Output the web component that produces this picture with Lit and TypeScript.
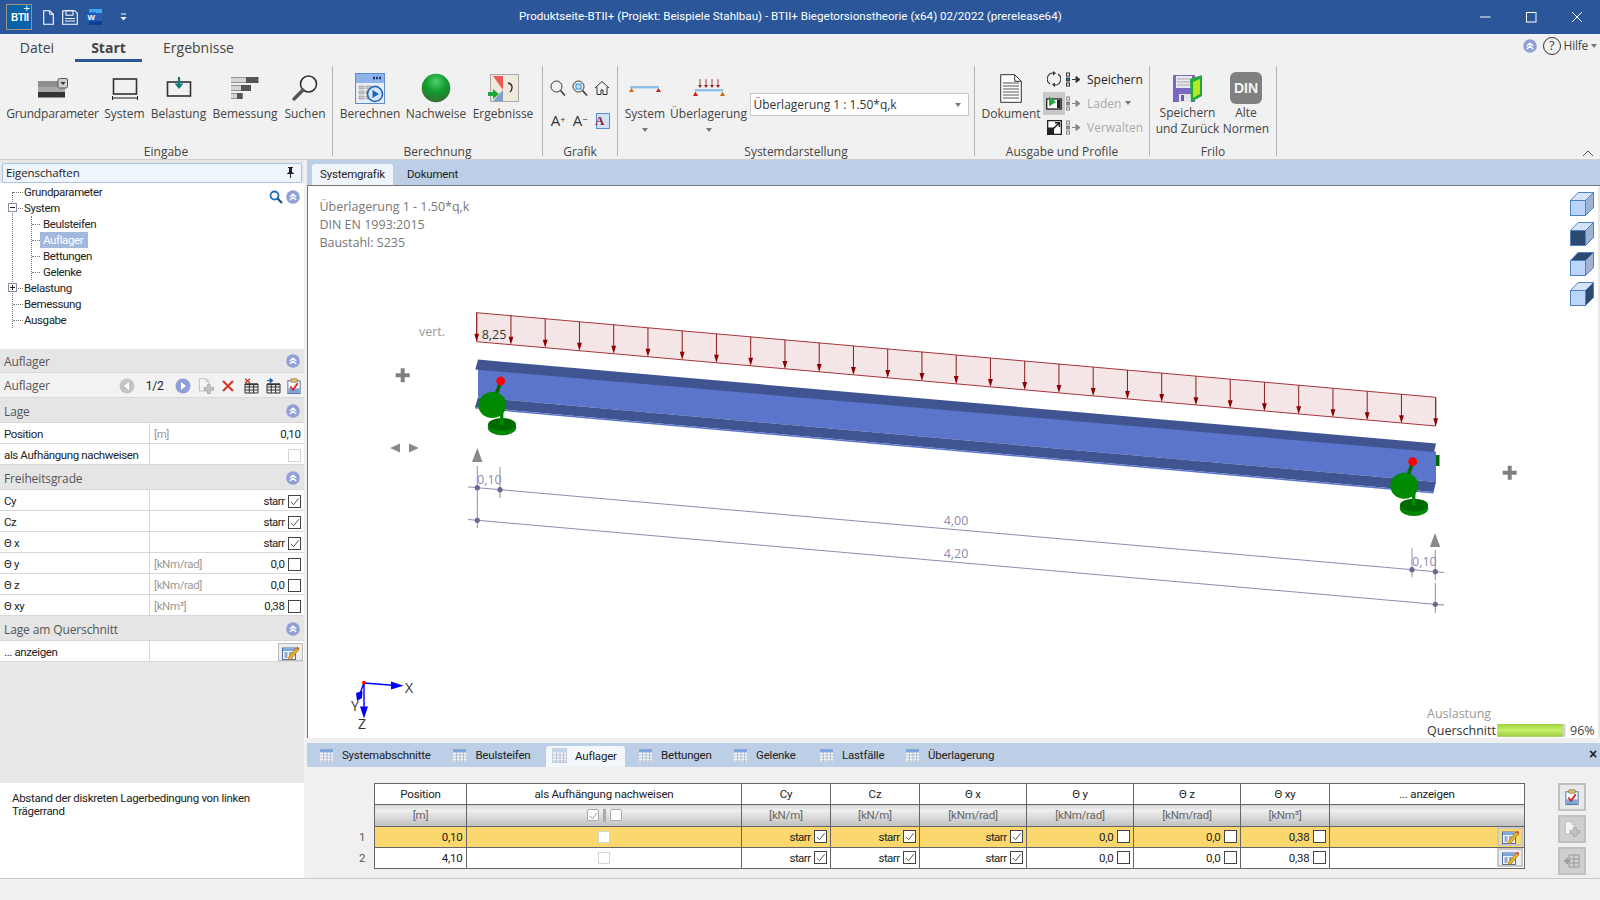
import { LitElement, html, css, svg } from "lit";
import { customElement } from "lit/decorators.js";

const chev = () => html`<svg class="chev" viewBox="0 0 14 14"><circle cx="7" cy="7" r="6.8" fill="#8f9fd8"/><path d="M3.8 7 7 4.2 10.2 7M3.8 10 7 7.2 10.2 10" fill="none" stroke="#fff" stroke-width="1.4"/></svg>`;
const gridIcon = (on = false) => html`<svg class="tabic" viewBox="0 0 15 15"><rect x=".5" y=".5" width="14" height="14" fill="#f6f8fc" stroke="#c4cedd"/><rect x="1" y="1" width="13" height="3.5" fill="${on ? "#c4d4ec" : "#7ea6de"}"/><path d="M1 7h13M1 10h13M1 13h13M4.5 4.5v10M8 4.5v10M11.500 4.5v10" stroke="${on ? "#aab6cc" : "#a8b4c6"}" stroke-width=".8"/></svg>`;
const check = (on: boolean, dis = false) => html`<span class="cb ${dis ? "dis" : ""}">${on ? html`<svg viewBox="0 0 12 12"><path d="M2 6.5 5 9.5 10.5 2.5" fill="none" stroke="#444" stroke-width="1"/></svg>` : ""}</span>`;
const editIcon = () => html`<svg class="ed" viewBox="0 0 17 15"><rect x=".5" y="3" width="13" height="11.500" fill="#f4f7fc" stroke="#4a6fa8"/><rect x="1" y="3.500" width="12" height="2.500" fill="#7ea6de"/><path d="M2.500 8h3M2.500 10h3M2.500 12h3M7 8h4M7 10h2M7 12h1" stroke="#3a5f98"/><path d="M6.500 12.500 14 3l2.500 2-7.500 9.200-3 .8z" fill="#f0b020" stroke="#7a5a10" stroke-width=".5"/><path d="M14 3l1.200-1.500 2.300 1.800L16.500 5z" fill="#d84a3a"/></svg>`;
const clip = () => html`<svg class="tool" viewBox="0 0 16 17"><rect x="1.500" y="3" width="13" height="13.500" fill="#fff" stroke="#4a6f9f"/><rect x="2" y="11" width="12" height="5" fill="#7fa4d8"/><rect x="4.500" y=".8" width="7" height="3.700" rx="1" fill="#e0c07a" stroke="#8a6a30" stroke-width=".7"/><path d="M4 9 7 12.500l5-7" fill="none" stroke="#d8222a" stroke-width="1.900"/></svg>`;
const tblIcon = (mark: string) => html`<svg class="tool" viewBox="0 0 16 16"><path d="M2 6h13v9H2zM2 9h13M2 12h13M6.300 6v9M10.600 6v9" fill="none" stroke="#333" stroke-width="1"/><rect x="2" y="5.500" width="13" height="1.600" fill="#333"/>${mark === "x"
  ? svg`<path d="M2 .8 7 5M7 .8 2 5" stroke="#c8322a" stroke-width="1.400"/>`
  : svg`<path d="M2 2.600h4M5 .4l3 2.200-3 2.200z" fill="#1d5fa8" stroke="#1d5fa8"/>`}</svg>`;
const pagePlus = () => html`<svg class="tool" viewBox="0 0 17 17"><path d="M1.500 .8h7l3 3v10h-10z" fill="#f4f4f4" stroke="#bdbdbd"/><path d="M8.500 .8v3h3" fill="none" stroke="#bdbdbd"/><path d="M10 7h3v3h3.500v3H13v3.500h-3V13H6.500v-3H10z" fill="#c4c4c4" stroke="#999" stroke-width=".7"/></svg>`;
const treeRows = [
  { t: "Grundparameter", l: 0 }, { t: "System", l: 0, box: "-" }, { t: "Beulsteifen", l: 1 },
  { t: "Auflager", l: 1, sel: true }, { t: "Bettungen", l: 1 }, { t: "Gelenke", l: 1 },
  { t: "Belastung", l: 0, box: "+" }, { t: "Bemessung", l: 0 }, { t: "Ausgabe", l: 0 },
];
const dof = [
  { n: "Cy", u: "", v: "starr", c: true }, { n: "Cz", u: "", v: "starr", c: true }, { n: "Θ x", u: "", v: "starr", c: true },
  { n: "Θ y", u: "[kNm/rad]", v: "0,0", c: false }, { n: "Θ z", u: "[kNm/rad]", v: "0,0", c: false }, { n: "Θ xy", u: "[kNm³]", v: "0,38", c: false },
];
const bottomTabs = ["Systemabschnitte", "Beulsteifen", "Auflager", "Bettungen", "Gelenke", "Lastfälle", "Überlagerung"];
const heads = ["Position", "als Aufhängung nachweisen", "Cy", "Cz", "Θ x", "Θ y", "Θ z", "Θ xy", "... anzeigen"];
const units = ["[m]", "", "[kN/m]", "[kN/m]", "[kNm/rad]", "[kNm/rad]", "[kNm/rad]", "[kNm³]", ""];

const X0 = 476.7;
const loadTop = (x: number) => 312.7 + 0.0882 * (x - X0);
const dim1 = (x: number) => 487.7 + 0.0877 * (x - 477.3);
const dim2 = (x: number) => 520.3 + 0.0877 * (x - 477.3);

const support = (dx: number, dy: number) => svg`<g transform="translate(${dx} ${dy})">
  <ellipse cx="502" cy="427.5" rx="14" ry="7.5" fill="#008a00" stroke="#006a00" stroke-width=".6"/>
  <ellipse cx="502" cy="424.5" rx="14" ry="6.5" fill="#006a00"/>
  <rect x="500" y="412" width="3.4" height="13" fill="#008a00"/>
  <path d="M500 384 495.5 396" stroke="#006a00" stroke-width="3.6"/>
  <circle cx="500.7" cy="381" r="4.4" fill="#f00"/>
  <ellipse cx="492.3" cy="405" rx="14" ry="13" fill="#008a00"/>
</g>`;
const plus = (x: number, y: number) => svg`<path transform="translate(${x} ${y})" d="M-2 -7h4v5h5v4h-5v5h-4v-5h-5v-4h5z" fill="#808080"/>`;
const cube = (y: number, v: number) => {
  const dark = "#2c4a70";
  return svg`<g transform="translate(1570 ${y})" stroke="#4f82c4" stroke-width="1">
    <path d="M.5 8.5 8 .5h15.500L15.500 8.500z" fill="${v === 2 ? dark : "#d5e4fa"}"/>
    <path d="M15.500 8.500 23.500 .5v15l-8 8z" fill="${v === 3 ? dark : "#9fb2d2"}"/>
    <rect x=".5" y="8.5" width="15" height="15" fill="${v === 1 ? dark : "#bcd6fb"}"/>
  </g>`;
};

@customElement("app-root")
export class AppRoot extends LitElement {
  static styles = css`
    :host { display: block; width: 1600px; height: 900px; overflow: hidden; background: #f1f1f1; color: #222;
      font-family: "Open Sans", "Noto Sans", sans-serif; font-size: 12px; }
    * { box-sizing: border-box; }
    svg { display: block; }
    .root { display: flex; flex-direction: column; width: 1600px; height: 900px; }

    .title { height: 34px; background: #2b579a; color: #fff; display: flex; align-items: center; position: relative; flex: none; }
    .logo { width: 26px; height: 26px; margin-left: 6px; background: #0a62a8; border: 1px solid #a09080; color: #fff; position: relative; padding: 8px 0 0 4px;
      font: bold 10px/10px "Liberation Sans Narrow", "Liberation Sans", sans-serif; letter-spacing: -.3px; }
    .logo b { position: absolute; right: 1px; top: -1px; font: normal 11px/8px "Liberation Sans", sans-serif; letter-spacing: 0; }
    .qa { display: flex; align-items: center; margin-left: 11px; gap: 8px; }
    .qa svg { flex: none; }
    .qa .more { margin-left: 10px; }
    .titletext { position: absolute; left: 519px; top: 0; width: 560px; white-space: nowrap; font: 11.6px/32px Roboto, sans-serif; }
    .win { position: absolute; right: 0; top: 0; }

    .tabs { height: 30px; flex: none; display: flex; position: relative; font-size: 14px; color: #444; }
    .tabs .t { text-align: center; line-height: 28px; height: 28px; }
    .t.datei { width: 74px; margin-right: 1px; }
    .t.start { width: 67px; font-weight: 700; border-bottom: 3px solid #2b579a; color: #444; }
    .t.erg { width: 113px; }
    .help { margin-left: auto; display: flex; align-items: center; height: 23px; gap: 3px; padding-right: 3px; font-size: 12px; letter-spacing: -.25px; }
    .q { width: 18px; height: 18px; border: 1.3px solid #333; border-radius: 50%; text-align: center; line-height: 15px; font-size: 13px; margin-left: 3px; }
    .caret { width: 0; height: 0; border: 3px solid transparent; border-top: 4px solid #777; border-bottom: 0; }

    .ribbon { height: 96px; flex: none; display: flex; position: relative; box-shadow: inset 0 -1px 0 #d0d0d0; }
    .sep { width: 1px; margin: 2px 0 4px; background: #b4b4b4; flex: none; }
    .grp { display: flex; flex-direction: column; flex: none; padding-top: 4px; }
    .grp .c { flex: 1; min-height: 0; }
    .grp .gl { height: 16px; line-height: 16px; text-align: center; color: #444; font-size: 12px; }
    .g1 { width: 332px; } .g2 { width: 209px; } .g3 { width: 74px; } .g4 { width: 356px; } .g5 { width: 174px; } .g6 { width: 126px; }
    .c.g1c { display: grid; grid-template-columns: 91px 40px 55px 65px 42px; column-gap: 6.5px; padding-left: 7px; }
    .c.g2c { display: grid; grid-template-columns: 60px 60px 62px; column-gap: 6px; padding-left: 7px; }
    .it { display: flex; flex-direction: column; align-items: center; white-space: nowrap; color: #444; }
    .ic { height: 38px; padding-top: 2px; display: flex; align-items: center; justify-content: center; flex: none; }
    .lb { line-height: 16px; text-align: center; }
    .lb.tight { letter-spacing: -.18px; }
    .lb.two { line-height: 15.5px; margin-top: -1px; }
    .c.g3c { display: grid; grid-template-columns: repeat(3, 22px); grid-template-rows: 32px 32px; padding: 4px 0 0 4px; }
    .c.g3c > * { display: flex; align-items: center; justify-content: center; }
    .c.g3c .aa { font-size: 15px; color: #333; }
    .aa sup { font-size: 9px; line-height: 0; }
    .c.g4c { display: flex; padding-left: 7px; }
    .sysit { width: 40px; }
    .ubit { width: 75px; margin-left: 6px; margin-right: 4.4px; }
    .sysit .ic, .ubit .ic { height: 38px; padding-top: 4px; }
    .sysit .caret, .ubit .caret { margin-top: 6px; }
    .combo { width: 218.5px; height: 22.5px; margin-top: 25px; background: #fff; border: 1px solid #c8c8c8; display: flex; align-items: center; padding: 1px 7px 0 2px; justify-content: space-between; color: #333; }
    .c.g5c { display: flex; padding-left: 6px; }
    .dok { width: 60px; }
    .mini { display: grid; grid-template-columns: 22px 22px auto; grid-auto-rows: 24px; margin: -1px 0 0 2px; align-items: center; justify-items: start; }
    .mini .g { background: #c8c8c8; height: 23px; width: 22px; display: flex; align-items: center; justify-content: center; }
    .mini .n { width: 22px; display: flex; justify-content: center; }
    .mini .m { display: flex; justify-content: center; width: 20px; margin-left: -2px; }
    .mini .off { color: #aaa; display: flex; align-items: center; gap: 4px; }
    .mini span { white-space: nowrap; }
    .c.g6c { display: grid; grid-template-columns: 61px 44px; column-gap: 6px; padding-left: 7px; }
    .din { width: 32px; height: 32px; background: #808080; border-radius: 6px; color: #f4f4f4; font: bold 14px/32px "Liberation Sans", sans-serif; text-align: center; }
    .rcaret { margin-left: auto; align-self: flex-end; padding: 0 6px 3px 0; }

    .main { flex: 1; min-height: 0; display: flex; }
    .left { width: 304px; flex: none; display: flex; flex-direction: column; background: #e8e8e8; font-family: Roboto, sans-serif; font-size: 11.5px; letter-spacing: -.38px; }
    .caption { margin: 3px 2px 0; height: 20px; background: #eef5fd; border: 1px solid #a9c2e2; border-radius: 2px; display: flex; align-items: center; justify-content: space-between; padding: 0 6px 1px 3px; color: #222; font-family: "Open Sans", sans-serif; font-size: 11.5px; letter-spacing: -.1px; flex: none; }
    .tree { height: 166px; background: #fff; position: relative; padding-top: 1px; flex: none; }
    .row { height: 16px; line-height: 16px; position: relative; padding-left: 24px; white-space: nowrap; }
    .row.l1 { padding-left: 43px; }
    .row::before { content: ""; position: absolute; left: 13px; width: 10px; top: 8px; border-top: 1px dotted #777; }
    .row.l1::before { left: 32px; width: 8px; }
    .row.sel span { background: #a3b8dd; color: #fff; padding-left: 3px; width: 48px; margin-left: -3px; display: inline-block; }
    .guide { position: absolute; border-left: 1px dotted #777; }
    .g-a { left: 12px; top: 9px; height: 136px; }
    .g-b { left: 31px; top: 33px; height: 64px; }
    .box { position: absolute; left: 8px; top: 3px; width: 9px; height: 9px; background: #fff; border: 1px solid #8a8aa8; z-index: 1; }
    .box::before { content: ""; position: absolute; left: 1px; right: 1px; top: 3px; border-top: 1px solid #222; }
    .box.p::after { content: ""; position: absolute; top: 1px; bottom: 1px; left: 3px; border-left: 1px solid #222; }
    .treetools { position: absolute; right: 4px; top: 7px; display: flex; align-items: center; gap: 3px; }
    .chev { width: 14px; height: 14px; flex: none; }
    .sec { height: 25px; background: #e5e5e5; border-bottom: 1px solid #d8d8d8; display: flex; align-items: center; justify-content: space-between; padding: 2px 4px 0; color: #555; flex: none; font-family: "Open Sans", sans-serif; font-size: 12px; letter-spacing: -.12px; }
    .sec.s0 { height: 24px; padding-top: 1px; }
    .tb { height: 25px; padding-top: 1px; background: #f2f2f2; border-bottom: 1px solid #d8d8d8; display: grid; grid-template-columns: 116px 22.6px 32.2px 25px 20.4px 23.6px 21.8px 22.2px 20.6px; align-items: center; justify-items: center; flex: none; }
    .tb .a { justify-self: start; padding-left: 4px; color: #555; font-family: "Open Sans", sans-serif; font-size: 12px; letter-spacing: -.12px; }
    .tb .num { font-size: 12px; letter-spacing: -.2px; }
    .tool { width: 16px; height: 16px; }
    .pr { height: 21px; background: #fff; border-bottom: 1px solid #d8d8d8; display: grid; grid-template-columns: 150px 1fr; flex: none; line-height: 22px; }
    .pr > div:first-child { padding-left: 4px; border-right: 1px solid #d8d8d8; white-space: nowrap; }
    .pv { display: flex; align-items: center; justify-content: space-between; padding: 0 3.5px 0 4px; }
    .pv .u { color: #999; }
    .pv .rt { display: flex; align-items: center; gap: 3px; }
    .cb { display: inline-block; width: 13px; height: 13px; background: #fff; border: 1px solid #444; flex: none; }
    .cb.dis { border-color: #d4d4d4; }
    .cb.rd { border-color: #aaa; border-radius: 2px; width: 12px; height: 12px; }
    .cb svg { width: 11px; height: 11px; }
    .ebtn { width: 25px; height: 18px; background: #ececec; border: 1px solid #bdbdbd; display: flex; align-items: center; justify-content: center; margin-right: -2px; }
    .ed { width: 17px; height: 15px; }
    .fill { flex: 1; }
    .desc { height: 95px; background: #fff; padding: 9px 12px; line-height: 13px; flex: none; color: #222; letter-spacing: -.3px; }

    .right { flex: 1; min-width: 0; display: flex; flex-direction: column; background: #e8e8e8; margin-left: 3px; font-family: Roboto, sans-serif; font-size: 11.5px; letter-spacing: -.2px; }
    .topband { height: 26px; flex: none; background: #bccfe6; border-bottom: 1px solid #777; display: flex; align-items: flex-end; padding-left: 5px; }
    .tt { height: 21px; line-height: 20px; padding: 0 8px; }
    .tt.on { background: #eff5fc; border-radius: 3px 3px 0 0; width: 81px; text-align: center; padding: 0; margin-right: 6px; }
    .canvas { height: 552px; flex: none; background: #fff; margin-right: 2px; border-left: 1px solid #777; position: relative; letter-spacing: 0; }
    .canvas svg { width: 1290px; height: 552px; position: absolute; left: 0; top: 0; }
    .canvas text { font-family: "Open Sans", sans-serif; }
    .gap { height: 5px; flex: none; background: #f0f0f0; }
    .btabs { height: 24px; flex: none; background: #bccfe6; display: flex; align-items: stretch; position: relative; padding-left: 11.6px; }
    .bt { display: flex; align-items: center; gap: 8.4px; white-space: nowrap; flex: none; }
    .bt.on { background: #f3f7fc; border-radius: 3px 3px 0 0; margin-top: 3px; padding: 0 0 2px 6px; margin-right: 13px; }
    .tabic { width: 15px; height: 15px; flex: none; }
    .bt.w0 { width: 133.4px; } .bt.w1 { width: 93.700px; } .bt.w2 { width: 79px; }
    .bt.w3 { width: 95px; } .bt.w4 { width: 86px; } .bt.w5 { width: 86px; } .bt.w6 { width: 110px; }
    .xclose { position: absolute; right: 3px; top: 4px; font: bold 14px/14px "Liberation Sans", sans-serif; color: #222; }
    .bpanel { flex: 1; min-height: 0; background: #f0f0f0; display: flex; padding: 16px 0 0 55px; gap: 33.1px; margin-right: -2px; }
    .tbl { display: grid; grid-template-columns: 12px 93px 275px 89px 89px 107px 107px 107px 89px 195px; grid-template-rows: 21.5px 22px 21px 21px; height: 86px; flex: none; }
    .rn { margin-left: -3px; color: #555; line-height: 20px; }
    .cell { background: #fff; border-right: 1px solid #666; border-bottom: 1px solid #666; display: flex; align-items: center; justify-content: center; white-space: nowrap; }
    .cell.h { border-top: 1px solid #666; }
    .cell.first { border-left: 1px solid #666; }
    .cell.u { background: linear-gradient(#d4d4d4, #f0f0f0 25%, #c0c0c0); color: #666; }
    .cell.y { background: #fad86e; }
    .cell.r { justify-content: flex-end; padding-right: 3.5px; gap: 3px; }
    .cell.en { padding-right: 1px; }
    .mc { width: 12px; height: 12px; background: #fff; border: 1px solid #d4d4d4; }
    .vbar { width: 3px; height: 13px; background: #aaa; margin: 0 4px; }
    .rr { letter-spacing: -.55px; }
    .side { display: flex; flex-direction: column; gap: 4px; flex: none; }
    .sb { width: 28px; height: 28px; background: #e8e8e8; border: 2px solid #c0c0c0; display: flex; align-items: center; justify-content: center; }
    .sb.d { background: #cfcfcf; }
    .ebtn2 { width: 26px; height: 19px; background: #eeeeee; border: 2px solid #c8c8c8; display: flex; align-items: center; justify-content: center; }
    .cell.y .ebtn2 { background: #fad86e; }
    .status { height: 22px; flex: none; background: #f1f1f1; border-top: 1px solid #c8c8c8; }
    .bar { fill: url(#barg); }
  `;

  private winCtl() {
    return html`<svg class="win" width="130" height="34" viewBox="1470 0 130 34"><path d="M1480 17h10.5" stroke="#fff"/><rect x="1526.5" y="12.5" width="9.5" height="9.5" fill="none" stroke="#fff"/><path d="M1572 12l10 10M1582 12l-10 10" stroke="#fff"/></svg>`;
  }

  private ribbon() {
    return html`<div class="ribbon">
      <div class="grp g1"><div class="c g1c">
        <div class="it"><div class="ic"><svg width="30" height="20" viewBox="0 0 30 20"><rect y="3" width="20" height="6" fill="#8f8f8f"/><rect y="9" width="27" height="5" fill="#a8a8a8"/><rect y="14" width="27" height="5.5" fill="#333"/><rect x="20" y=".5" width="9.5" height="9.5" rx="1.5" fill="#cfcfcf" stroke="#555"/><path d="M22.5 4h5l-2.5 3z" fill="#333"/></svg></div><div class="lb tight">Grundparameter</div></div>
        <div class="it"><div class="ic"><svg width="28" height="24" viewBox="0 0 28 24"><rect x="2.5" y="3" width="23" height="15" fill="none" stroke="#333" stroke-width="1.6"/><path d="M1 22h26M1.5 20v4M26.5 20v4" stroke="#222"/></svg></div><div class="lb">System</div></div>
        <div class="it"><div class="ic"><svg width="26" height="24" viewBox="0 0 26 24"><rect x="1.5" y="6" width="23" height="14" fill="none" stroke="#333" stroke-width="1.6"/><path d="M13 1v8" stroke="#0e7a7a" stroke-width="2.2"/><path d="M8.5 7.5h9L13 13z" fill="#0e7a7a"/></svg></div><div class="lb">Belastung</div></div>
        <div class="it"><div class="ic"><svg width="28" height="24" viewBox="0 0 28 24"><rect y="1" width="27.5" height="6" fill="#555"/><rect y="1.5" width="15" height="5" fill="#d4d4d4"/><rect y="9" width="20" height="6" fill="#555"/><rect y="9.5" width="10" height="5" fill="#d4d4d4"/><rect y="17" width="11.7" height="6" fill="#555"/><rect y="17.5" width="6" height="5" fill="#d4d4d4"/></svg></div><div class="lb">Bemessung</div></div>
        <div class="it"><div class="ic"><svg width="28" height="28" viewBox="0 0 28 28"><circle cx="17.5" cy="10" r="8" fill="#fff" fill-opacity=".3" stroke="#333" stroke-width="1.6"/><path d="M12 16 3 25" stroke="#555" stroke-width="3.4" stroke-linecap="round"/></svg></div><div class="lb">Suchen</div></div>
      </div><div class="gl">Eingabe</div></div>
      <div class="sep"></div>
      <div class="grp g2"><div class="c g2c">
        <div class="it"><div class="ic"><svg width="30" height="31" viewBox="0 0 30 31"><rect x=".5" y=".5" width="29" height="30" fill="#e8eef8" stroke="#5f8bd0"/><rect x="1" y="1" width="28" height="9" fill="#8fb2ea"/><path d="M18 5h9" stroke="#1d3d70" stroke-width="2.5" stroke-dasharray="2 1"/><path d="M4 13h5v3H4zM11 13h5v3h-5zM18 13h5v3h-5zM4 18h5v3H4zM11 18h5v3h-5zM4 23h5v3H4zM11 23h5v3h-5z" fill="#c8c8c8" stroke="#888" stroke-width=".5"/><circle cx="20" cy="21" r="7.5" fill="#d6e6fa" stroke="#1b66b8" stroke-width="1.6"/><path d="M17.5 17v8l6.5-4z" fill="#1b66b8"/></svg></div><div class="lb">Berechnen</div></div>
        <div class="it"><div class="ic"><svg width="30" height="30" viewBox="0 0 30 30"><defs><radialGradient id="gb" cx=".5" cy=".28" r=".75"><stop offset="0" stop-color="#4fd06a"/><stop offset=".5" stop-color="#0f9a2e"/><stop offset="1" stop-color="#3b6a35"/></radialGradient></defs><circle cx="15" cy="15" r="14.3" fill="url(#gb)"/></svg></div><div class="lb">Nachweise</div></div>
        <div class="it"><div class="ic"><svg width="31" height="29" viewBox="0 0 31 29"><rect x="2.5" y=".5" width="28" height="27" fill="#efe9dc" stroke="#a8a8a8"/><path d="M5 2h10v14z" fill="#ee5a5a"/><path d="M15 16v11H5z" fill="#7fa0c8"/><path d="M20 9c5 1 5 6 2 9" fill="none" stroke="#222" stroke-width="1.3"/><path d="M0 18h5v-3l6 5-6 5v-3H0z" fill="#1ea83c"/></svg></div><div class="lb">Ergebnisse</div></div>
      </div><div class="gl">Berechnung</div></div>
      <div class="sep"></div>
      <div class="grp g3"><div class="c g3c">
        <div><svg width="16" height="17" viewBox="0 0 16 17"><circle cx="6.5" cy="6.5" r="5.5" fill="none" stroke="#333"/><path d="M10.5 10.5l4.5 5" stroke="#333" stroke-width="1.5"/></svg></div>
        <div><svg width="16" height="17" viewBox="0 0 16 17"><circle cx="6.5" cy="6.5" r="5.5" fill="none" stroke="#333"/><rect x="4" y="4" width="5" height="5" fill="#bfe0f5" stroke="#2a8fd0"/><path d="M10.5 10.5l4.5 5" stroke="#333" stroke-width="1.5"/></svg></div>
        <div><svg width="16" height="16" viewBox="0 0 16 16"><path d="M1 8 8 1.5 15 8M3 7v7.5h4V10h2v4.5h4V7" fill="none" stroke="#333"/></svg></div>
        <div class="aa">A<sup>+</sup></div>
        <div class="aa">A<sup>−</sup></div>
        <div><svg width="16" height="17" viewBox="0 0 16 17"><rect x="2.5" y="1.5" width="13" height="15" fill="#d0e2f6" stroke="#5f8bd0"/><text x="1" y="13" font-family="Liberation Serif" font-weight="700" font-size="13" fill="#9c1c2a">A</text></svg></div>
      </div><div class="gl">Grafik</div></div>
      <div class="sep"></div>
      <div class="grp g4"><div class="c g4c">
        <div class="it sysit"><div class="ic"><svg width="32" height="12" viewBox="0 0 32 12"><rect x="1" y="3" width="29" height="2.4" fill="#8fc0ea"/><path d="M0 9 2.5 5l2.5 4z" fill="#d06a10"/><path d="M27 9l2.5-4 2.5 4z" fill="#d01818"/></svg></div><div class="lb">System</div><div class="caret"></div></div>
        <div class="it ubit"><div class="ic"><svg width="32" height="22" viewBox="0 0 32 22"><path d="M7 1v8M13 1v8M19 1v8M25 1v8" stroke="#a04040"/><path d="M5 7h4l-2 3zM11 7h4l-2 3zM17 7h4l-2 3zM23 7h4l-2 3z" fill="#a02020"/><rect x="2" y="11" width="28" height="2.4" fill="#8fc0ea"/><path d="M0 18l2.5-4.5L5 18z" fill="#d01818"/><path d="M27 18l2.5-4.5L32 18z" fill="#d06a10"/></svg></div><div class="lb">Überlagerung</div><div class="caret"></div></div>
        <div class="combo"><span>Überlagerung 1 : 1.50*q,k</span><div class="caret"></div></div>
      </div><div class="gl">Systemdarstellung</div></div>
      <div class="sep"></div>
      <div class="grp g5"><div class="c g5c">
        <div class="it dok"><div class="ic"><svg width="22" height="29" viewBox="0 0 22 29"><path d="M.7.7h14l6.6 6.6v21H.7z" fill="#fff" stroke="#333"/><path d="M14.7.7v6.6h6.6" fill="none" stroke="#333"/><path d="M3 9h16M3 12h16M3 15h16M3 18h16M3 21h16M3 24h16" stroke="#555"/></svg></div><div class="lb">Dokument</div></div>
        <div class="mini">
          <div class="n"><svg width="14" height="16" viewBox="0 0 14 16"><path d="M7 2A6 6 0 0 0 3 13M7 14a6 6 0 0 0 4-11" fill="none" stroke="#333" stroke-width="1.1"/><path d="M6 0l3 2.2L6 4.5zM8 16l-3-2.2L8 11.5z" fill="#333"/></svg></div>
          <div class="m">${this.listIcon("#333", "#0a8ad0")}</div><span>Speichern</span>
          <div class="g"><svg width="16" height="14" viewBox="0 0 16 14"><rect x=".7" y="3" width="14.5" height="10" fill="#fff" stroke="#222" stroke-width="1.3"/><rect x="11" y="4" width="3.5" height="8" fill="#222"/><path d="M3 .5v10L10 6z" fill="#1ea83c"/></svg></div>
          <div class="m">${this.listIcon("#888", "#888")}</div><span class="off">Laden <i class="caret"></i></span>
          <div class="n"><svg width="15" height="15" viewBox="0 0 15 15"><rect width="14" height="14" x=".5" y=".5" fill="#fff" stroke="#222" stroke-width="1.6"/><rect x="1" y="7.5" width="6" height="6.5" fill="#222"/><path d="M6 9 12 3M8 2.7h4.4v4.4" fill="none" stroke="#222" stroke-width="1.5"/></svg></div>
          <div class="m">${this.listIcon("#888", "#888")}</div><span class="off">Verwalten</span>
        </div>
      </div><div class="gl">Ausgabe und Profile</div></div>
      <div class="sep"></div>
      <div class="grp g6"><div class="c g6c">
        <div class="it"><div class="ic"><svg width="30" height="29" viewBox="0 0 30 29"><path d="M0 1h22v27H0z" fill="#7a68c0"/><rect x="3" y="2" width="16" height="12" fill="#e8e8f0"/><path d="M4 5h14M4 8h14M4 11h14" stroke="#aaa"/><rect x="6" y="20" width="12" height="8" fill="#e4e4e4"/><rect x="8" y="21" width="3" height="6" fill="#6a5ab0"/><path d="M17 5 29 1v21l-11 6z" fill="#1fa83c"/><path d="M20 8l7-3v15l-7 4z" fill="#b2e824"/></svg></div><div class="lb two">Speichern<br>und Zurück</div></div>
        <div class="it"><div class="ic"><div class="din">DIN</div></div><div class="lb two">Alte<br>Normen</div></div>
      </div><div class="gl">Frilo</div></div>
      <div class="sep"></div>
      <div class="rcaret"><svg width="12" height="7" viewBox="0 0 12 7"><path d="M1 6 6 1l5 5" fill="none" stroke="#555"/></svg></div>
    </div>`;
  }

  private listIcon(c: string, a: string) {
    return html`<svg width="15" height="15" viewBox="0 0 15 15"><rect x=".5" y="1" width="3" height="3" fill="none" stroke="${c}"/><rect x=".5" y="6" width="3" height="3" fill="${a}" stroke="${c}"/><rect x=".5" y="11" width="3" height="3" fill="none" stroke="${c}"/><path d="M6 7.5h6M10 4.5l4 3-4 3z" fill="${c}" stroke="${c}"/></svg>`;
  }

  private drawing() {
    const arrows = Array.from({ length: 29 }, (_, i) => X0 + i * 34.25);
    return html`<svg viewBox="308 186 1290 552">
      <defs><linearGradient id="barg" x1="0" y1="0" x2="0" y2="1"><stop offset="0" stop-color="#9ed43c"/><stop offset=".5" stop-color="#c8ee6a"/><stop offset="1" stop-color="#98cc38"/></linearGradient></defs>
      <text x="319.4" y="211" font-size="12.5" fill="#777">Überlagerung 1 - 1.50*q,k</text>
      <text x="319.4" y="229" font-size="12.5" fill="#777">DIN EN 1993:2015</text>
      <text x="319.4" y="247" font-size="12.5" fill="#777">Baustahl: S235</text>
      <text x="419" y="336" font-size="12.5" fill="#999">vert.</text>

      <path d="M476.7 312.7 1435.7 397.3V426L476.7 341.7z" fill="#f4e6e6" stroke="#a8343c" stroke-width="1"/>
      ${arrows.map((x) => svg`<path d="M${x} ${loadTop(x)}V${loadTop(x) + 22}" stroke="#8b1a1a" stroke-width="1"/><path d="M${x - 2.4} ${loadTop(x) + 21}h4.8L${x} ${loadTop(x) + 29}z" fill="#8b0000"/>`)}
      <text x="481.7" y="339" font-size="12.5" fill="#333">8,25</text>

      <path d="M1436 455h3.5v11H1436z" fill="#006a00"/>
      <path d="M478 368 1436 451.5V482L478 397.4z" fill="#5a75cb"/>
      <path d="M478 359.6 1436 443.4 1434 452 475.3 369.5z" fill="#3f5490"/>
      <path d="M478 397.4 1436 482 1433.5 492 475 407z" fill="#3f5490"/>
      <path d="M475 407 1433.5 492V493.5L475 408.5z" fill="#5a75cb"/>
      ${support(0, 0)}
      ${support(912, 80.7)}

      ${plus(402.7, 375.3)}${plus(1509.7, 472.7)}
      <path d="M390 448 400 443.5V452.5zM419 448 409 443.5V452.5z" fill="#8a8a8a"/>
      <path d="M477.3 448 482.5 462H472z" fill="#8a8a8a"/>
      <path d="M1435 533 1440.2 547H1429.8z" fill="#8a8a8a"/>

      <g stroke="#8e8cb0" fill="none" stroke-width="1">
        <path d="M468 ${dim1(468)}L1444 ${dim1(1444)}M468 ${dim2(468)}L1444 ${dim2(1444)}"/>
        <path d="M477.3 466V499M500 467V498M477.3 498V528M1412 548V577M1435.3 550V580M1435.3 583V613"/>
      </g>
      ${[[477.3, dim1(477.3)], [500, dim1(500)], [1412, dim1(1412)], [1435.3, dim1(1435.3)], [477.3, dim2(477.3)], [1435.3, dim2(1435.3)]].map(([x, y]) => svg`<circle cx="${x}" cy="${y}" r="2.6" fill="#6a6890"/>`)}
      <g font-size="12.5" fill="#8e8cb0">
        <text x="477" y="484">0,10</text>
        <text x="1412" y="566">0,10</text>
        <text x="956" y="525" text-anchor="middle">4,00</text>
        <text x="956" y="558" text-anchor="middle">4,20</text>
      </g>

      ${cube(192, 0)}${cube(222, 1)}${cube(252, 2)}${cube(282, 3)}

      <g fill="#0000ff" stroke="#0000ff">
        <path d="M364 683 396 685.5M364 683V708M364 683 359 696" fill="none" stroke-width="1.4"/>
        <path d="M403.6 685.8 391 681.5V689.5zM364 718.5 360 706.5H368zM357 701 356 693 362.5 691 362 698z" stroke="none"/>
      </g>
      <circle cx="364" cy="682.7" r="2" fill="#f00"/>
      <text x="405" y="693" font-size="14" fill="#333">X</text>
      <text x="351" y="711" font-size="14" fill="#333">Y</text>
      <text x="358" y="729" font-size="14" fill="#333">Z</text>

      <text x="1427" y="717.5" font-size="12.5" fill="#999">Auslastung</text>
      <text x="1427" y="734.5" font-size="12.5" fill="#333">Querschnitt</text>
      <rect x="1497.3" y="724" width="68" height="12.7" fill="#cfcfcf"/>
      <rect class="bar" x="1497.3" y="724" width="65.3" height="12.7"/>
      <text x="1570" y="734.5" font-size="12.5" fill="#444">96%</text>
    </svg>`;
  }

  private tableRow(n: number, pos: string, yellow: boolean) {
    const y = yellow ? "y" : "";
    return html`
      <div class="rn">${n}</div>
      <div class="cell r first ${y}">${pos}</div>
      <div class="cell ${y}"><span class="mc"></span></div>
      ${[0, 1, 2].map(() => html`<div class="cell r ${y}"><span class="rr">starr</span>${check(true)}</div>`)}
      ${["0,0", "0,0", "0,38"].map((v) => html`<div class="cell r ${y}">${v}${check(false)}</div>`)}
      <div class="cell r en ${y}"><div class="ebtn2">${editIcon()}</div></div>`;
  }

  render() {
    return html`<div class="root">
      <div class="title">
        <div class="logo">BTII<b>+</b></div>
        <div class="qa">
          <svg width="11" height="15" viewBox="0 0 11 15"><path d="M.7.7h6l3.6 3.6v10H.7z" fill="none" stroke="#fff" stroke-width="1.1"/><path d="M6.7.7v3.6h3.6" fill="none" stroke="#fff"/></svg>
          <svg width="16" height="15" viewBox="0 0 16 15"><path d="M.7.7h12l2.6 2.6v11H.7z" fill="none" stroke="#fff" stroke-width="1.1"/><rect x="4" y=".7" width="7" height="4.5" fill="none" stroke="#fff"/><path d="M3 8.5h10M3 11h10" stroke="#fff"/></svg>
          <svg width="16" height="16" viewBox="0 0 16 16"><rect x="3" y="0" width="13" height="16" fill="#2a5cb8"/><rect x="3" y="0" width="13" height="4" fill="#41a5ee"/><rect x="3" y="12" width="13" height="4" fill="#103f91"/><rect x="0" y="3.5" width="10" height="9" fill="#185abd"/><text x="1.5" y="11" font-size="8" font-weight="700" fill="#fff" font-family="Liberation Sans">W</text></svg>
          <svg class="more" width="7" height="9" viewBox="0 0 7 9"><path d="M1 1h5" stroke="#fff"/><path d="M.5 4h6L3.5 7.5z" fill="#fff"/></svg>
        </div>
        <div class="titletext">Produktseite-BTII+ (Projekt: Beispiele Stahlbau) - BTII+ Biegetorsionstheorie (x64) 02/2022 (prerelease64)</div>
        ${this.winCtl()}
      </div>
      <div class="tabs">
        <div class="t datei">Datei</div><div class="t start">Start</div><div class="t erg">Ergebnisse</div>
        <div class="help">${chev()}<span class="q">?</span><span>Hilfe</span><div class="caret"></div></div>
      </div>
      ${this.ribbon()}
      <div class="main">
        <div class="left">
          <div class="caption"><span>Eigenschaften</span><svg width="9" height="11" viewBox="0 0 9 11"><path d="M2 0h5v1H6v4l2 1.500V7H1v-.5L3 5V1H2zM4 7h1v4H4z" fill="#222"/></svg></div>
          <div class="tree">
            <div class="guide g-a"></div><div class="guide g-b"></div>
            ${treeRows.map((r) => html`<div class="row ${r.l ? "l1" : ""} ${r.sel ? "sel" : ""}">${r.box ? html`<i class="box ${r.box === "+" ? "p" : ""}"></i>` : ""}<span>${r.t}</span></div>`)}
            <div class="treetools"><svg width="14" height="14" viewBox="0 0 14 14"><circle cx="5.500" cy="5.500" r="4" fill="#fff" stroke="#1d6fb8" stroke-width="1.800"/><path d="M8.500 8.500 13 13" stroke="#1d4f88" stroke-width="2.200"/></svg>${chev()}</div>
          </div>
          <div class="sec s0"><span>Auflager</span>${chev()}</div>
          <div class="tb"><span class="a">Auflager</span>
            <svg class="tool" viewBox="0 0 16 16"><circle cx="8" cy="8" r="7.500" fill="#c4c4c4"/><path d="M10 4v8L5 8z" fill="#fff"/></svg>
            <span class="num">1/2</span>
            <svg class="tool" viewBox="0 0 16 16"><circle cx="8" cy="8" r="7.500" fill="#8f9fd8"/><path d="M6 4v8l5-4z" fill="#fff"/></svg>
            ${pagePlus()}
            <svg class="tool" viewBox="0 0 16 16"><path d="M3 3l10 10M13 3 3 13" stroke="#d43c30" stroke-width="2.200"/></svg>
            ${tblIcon("x")}${tblIcon("a")}${clip()}
          </div>
          <div class="sec"><span>Lage</span>${chev()}</div>
          <div class="pr"><div>Position</div><div class="pv"><span class="u">[m]</span><span>0,10</span></div></div>
          <div class="pr"><div>als Aufhängung nachweisen</div><div class="pv"><span></span>${check(false, true)}</div></div>
          <div class="sec"><span>Freiheitsgrade</span>${chev()}</div>
          ${dof.map((d) => html`<div class="pr"><div>${d.n}</div><div class="pv"><span class="u">${d.u}</span><span class="rt"><span class="${d.c ? "rr" : ""}">${d.v}</span>${check(d.c)}</span></div></div>`)}
          <div class="sec"><span>Lage am Querschnitt</span>${chev()}</div>
          <div class="pr"><div>... anzeigen</div><div class="pv"><span></span><div class="ebtn">${editIcon()}</div></div></div>
          <div class="fill"></div>
          <div class="desc">Abstand der diskreten Lagerbedingung von linken<br>Trägerrand</div>
        </div>
        <div class="right">
          <div class="topband"><div class="tt on">Systemgrafik</div><div class="tt">Dokument</div></div>
          <div class="canvas">${this.drawing()}</div>
          <div class="gap"></div>
          <div class="btabs">
            ${bottomTabs.map((t, i) => html`<div class="bt w${i} ${i === 2 ? "on" : ""}">${gridIcon(i === 2)}<span>${t}</span></div>`)}
            <div class="xclose">×</div>
          </div>
          <div class="bpanel">
            <div class="tbl">
              <div></div>
              ${heads.map((h, i) => html`<div class="cell h ${i === 0 ? "first" : ""}">${h}</div>`)}
              <div></div>
              ${units.map((u, i) => html`<div class="cell u ${i === 0 ? "first" : ""}">${i === 1 ? html`<span class="cb rd"><svg viewBox="0 0 12 12"><path d="M2 6.5 5 9.5 10 3" fill="none" stroke="#888"/></svg></span><span class="vbar"></span><span class="cb rd"></span>` : u}</div>`)}
              ${this.tableRow(1, "0,10", true)}
              ${this.tableRow(2, "4,10", false)}
            </div>
            <div class="side">
              <div class="sb">${clip()}</div>
              <div class="sb d">${pagePlus()}</div>
              <div class="sb d"><svg class="tool" viewBox="0 0 16 16"><path d="M5 2h10v12H5zM5 6h10M5 10h10M10 2v12" fill="none" stroke="#999"/><path d="M0 8h6M3 5v6" stroke="#999" stroke-width="1.800"/></svg></div>
            </div>
          </div>
        </div>
      </div>
      <div class="status"></div>
    </div>`;
  }
}
